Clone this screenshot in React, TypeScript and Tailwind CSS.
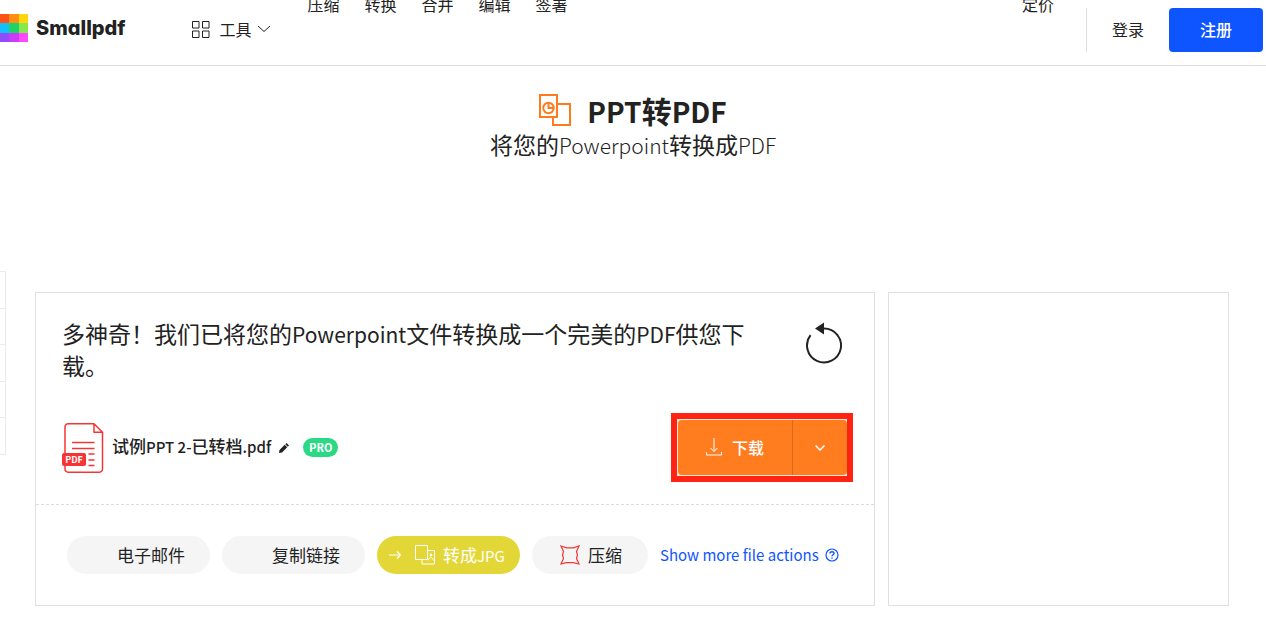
import React, { useState } from "react";

const navLinks = ["压缩", "转换", "合并", "编辑", "签署"];

const logoColors = [
  "fill-[#ff5219]",
  "fill-[#ff8f14]",
  "fill-[#ffd60a]",
  "fill-[#14bfff]",
  "fill-[#1fd466]",
  "fill-[#85e84d]",
  "fill-[#8f4dff]",
  "fill-[#c93dfa]",
  "fill-[#ff47ff]",
];

function LogoMark() {
  return (
    <svg className="h-7 w-7" viewBox="0 0 28 28" shapeRendering="crispEdges" aria-hidden="true">
      {logoColors.map((color, i) => (
        <rect
          key={color}
          className={color}
          x={(i % 3) * 9.4}
          y={Math.floor(i / 3) * 9.4}
          width="9.4"
          height="9.4"
        />
      ))}
    </svg>
  );
}

function ConvertIcon() {
  return (
    <svg className="h-8 w-8" viewBox="0 0 32 32" fill="none" stroke="#ff7a1c" strokeWidth="2" aria-hidden="true">
      <path d="M1 1h17v22H1z" />
      <path d="M18 10h13v21H14v-8" />
      <circle cx="9.5" cy="14" r="5.2" />
      <path d="M9.5 9v5h5" />
    </svg>
  );
}

function RestartIcon() {
  return (
    <svg className="h-[42px] w-9" viewBox="0 0 36 42" aria-hidden="true">
      <path
        d="M18 6.500A17 17 0 1 1 4.500 13.200"
        fill="none"
        stroke="#222"
        strokeWidth="2"
      />
      <path d="M9 6.500l9-6v12z" fill="#222" />
    </svg>
  );
}

function PdfFileIcon() {
  return (
    <svg className="h-[50px] w-[42px]" viewBox="0 0 42 50" fill="none" aria-hidden="true">
      <path
        d="M32 .8H6a3 3 0 0 0-3 3v42.400a3 3 0 0 0 3 3h31.500a3 3 0 0 0 3-3V9.200zM32 .8v8.400h8.500"
        stroke="#f73434"
        strokeWidth="1.500"
        strokeLinejoin="round"
      />
      <path d="M10 19.500h22.500M10 25.500h22.500M26.500 31h6M26.500 37h6M26.500 42.500h6" stroke="#f73434" strokeWidth="1.500" />
      <rect x="0" y="30" width="24" height="13" rx="2" fill="#f73434" />
      <text
        x="12"
        y="39.500"
        textAnchor="middle"
        className="fill-white font-['Noto_Sans_CJK_SC',sans-serif] text-[9px] font-bold"
      >
        PDF
      </text>
    </svg>
  );
}

function JpgIcon() {
  return (
    <svg className="h-5 w-5" viewBox="0 0 20 20" fill="none" stroke="white" strokeWidth="1" aria-hidden="true">
      <path d="M.5.5h12v14H.5z" />
      <path d="M12.500 5.500h7v13.500H7v-4.500" />
      <path d="M12.500 15l3.500-3 3.500 4" />
      <circle cx="16" cy="10" r="1" fill="white" />
    </svg>
  );
}

function CompressIcon() {
  return (
    <svg className="h-5 w-5" viewBox="0 0 20 20" fill="none" stroke="#f73434" strokeWidth="1.200" aria-hidden="true">
      <path d="M1 1l5.500 1.800h7L19 1l-2.500 5.500 1 3.500-1 3.500L19 19l-5.500-1.300h-7L1 19l2.500-5.500-1-3.500 1-3.500z" />
    </svg>
  );
}

function Header() {
  return (
    <header className="flex h-[66px] items-start border-b border-[#dcdcdc]">
      <a href="#home" className="flex items-center gap-2 pt-3.5">
        <LogoMark />
        <span className="font-['Inter',sans-serif] text-[20px] leading-7 font-extrabold [font-feature-settings:'cv11']">
          Smallpdf
        </span>
      </a>
      <button type="button" className="ml-[66px] flex items-center pt-[17px] text-base leading-6">
        <svg className="h-[18px] w-[18px]" viewBox="0 0 18 18" fill="none" stroke="#222" aria-hidden="true">
          <path d="M.5 1.500h6.500v6.500H.5zM10.500 1.500H17v6.500h-6.500zM.5 11h6.500v6.500H.5zM10.500 11H17v6.500h-6.500z" />
        </svg>
        <span className="ml-2.5">工具</span>
        <svg className="ml-1.5 h-2 w-3" viewBox="0 0 12 8" fill="none" stroke="#222" aria-hidden="true">
          <path d="M0 1l6 5.500L12 1" />
        </svg>
      </button>
      <nav className="-mt-2 ml-[38px] flex gap-[25px] text-base leading-6">
        {navLinks.map((label) => (
          <a key={label} href="#tool">
            {label}
          </a>
        ))}
      </nav>
      <a href="#pricing" className="-mt-2 mr-8 ml-auto text-base leading-6">
        定价
      </a>
      <div className="mt-2 mr-[3px] flex h-11 items-center border-l border-[#dcdcdc] text-base">
        <a href="#login" className="-mt-0.5 px-[25px]">
          登录
        </a>
        <button type="button" className="h-11 rounded bg-[#0f55ff] px-[31px] pb-0.5 font-medium text-white">
          注册
        </button>
      </div>
    </header>
  );
}

export default function App() {
  const [menuOpen, setMenuOpen] = useState(false);

  const pill = "flex h-[38px] items-center rounded-full bg-[#f5f5f5] text-[17px]";

  return (
    <div className="bg-white font-['Noto_Sans_CJK_SC',sans-serif] text-[#222]">
      <Header />

      <section className="pt-7 text-center">
        <div className="flex items-center justify-center gap-4">
          <ConvertIcon />
          <h1 className="text-[30px] leading-8 font-bold">
            <span className="text-[28px] leading-none">PPT</span>转<span className="text-[28px] leading-none">PDF</span>
          </h1>
        </div>
        <p className="mt-0.5 text-[23px] leading-8">
          将您的<span className="text-[21px] leading-none font-light">Powerpoint</span>转换成
          <span className="text-[21px] leading-none font-light">PDF</span>
        </p>
      </section>

      <main className="mt-[111px] flex items-start">
        <aside className="flex h-[184px] w-1.5 flex-col border-t border-r border-[#ebebeb]">
          {[0, 1, 2, 3, 4].map((row) => (
            <div key={row} className="flex-1 border-b border-[#ebebeb]" />
          ))}
        </aside>

        <div className="mt-[21px] mr-[37px] ml-[29px] flex flex-1 gap-[13px]">
          <section className="flex-1 border border-[#e0e0e0]">
            <div className="border-b border-dashed border-[#dcdcdc] pt-6 pr-[21px] pb-[22px] pl-[26px]">
              <div className="flex items-start justify-between">
                <h2 className="max-w-[684px] text-[23px] leading-8">
                  多神奇！我们已将您的<span className="text-[21px] leading-none">Powerpoint</span>文件转换成一个完美的
                  <span className="text-[21px] leading-none">PDF</span>供您下载。
                </h2>
                <button type="button" className="mt-[5px] mr-[11px]" aria-label="重新开始">
                  <RestartIcon />
                </button>
              </div>

              <div className="mt-8 flex items-center">
                <PdfFileIcon />
                <span className="-mt-1 ml-2 text-[17px] font-medium">
                  试例<span className="text-[15px]">PPT 2-</span>已转档<span className="text-[15px]">.pdf</span>
                </span>
                <button type="button" className="ml-2" aria-label="重命名">
                  <svg className="h-2.5 w-2.5" viewBox="0 0 10 10" fill="#222" aria-hidden="true">
                    <path d="M0 10l.5-3L5.700 1.800l2.500 2.500L3 9.500zM6.300 1.200L7.500 0 10 2.500 8.800 3.700z" />
                  </svg>
                </button>
                <span className="ml-3.5 h-[19px] rounded-full bg-[#2bd985] px-1.5 text-[11px] leading-[19px] font-bold text-white">
                  PRO
                </span>

                <div className="ml-auto flex h-[69px] border-[6px] border-[#ff2314] bg-[#ffe8d8] py-px pl-px text-white">
                  <button
                    type="button"
                    className="flex w-[114px] items-center justify-center rounded-l bg-[#ff7c1f] pb-0.5 text-base font-medium"
                  >
                    <svg className="mr-2.5 h-[18px] w-4" viewBox="0 0 16 18" fill="none" stroke="white" aria-hidden="true">
                      <path d="M8 0v13.500M4.500 10L8 13.500l3.500-3.500M.5 14v3h15v-3" />
                    </svg>
                    下载
                  </button>
                  <button
                    type="button"
                    className="flex w-[55px] items-center justify-center rounded-r border-l border-[#dc6a1a] bg-[#ff7c1f]"
                    aria-label="更多下载选项"
                    aria-expanded={menuOpen}
                    onClick={() => setMenuOpen(!menuOpen)}
                  >
                    <svg className="h-1.5 w-2.5" viewBox="0 0 10 6" fill="none" stroke="white" strokeWidth="1.500" aria-hidden="true">
                      <path d="M.5.5L5 5 9.500.5" />
                    </svg>
                  </button>
                </div>
              </div>
            </div>

            <div className="flex items-center gap-3 py-[31px] pl-[31px]">
              <button type="button" className={`${pill} w-[143px] justify-end pr-[25px]`}>
                电子邮件
              </button>
              <button type="button" className={`${pill} w-[143px] justify-end pr-[25px]`}>
                复制链接
              </button>
              <button
                type="button"
                className="flex h-[38px] w-[143px] items-center rounded-full bg-[#e3d738] pl-3 text-[17px] text-white"
              >
                <svg className="mr-3.5 h-2.5 w-3" viewBox="0 0 12 10" fill="none" stroke="white" strokeWidth="1.200" aria-hidden="true">
                  <path d="M0 5h11.500M8 1.500L11.500 5 8 8.500" />
                </svg>
                <JpgIcon />
                <span className="ml-2">
                  转成<span className="text-[15px]">JPG</span>
                </span>
              </button>
              <button type="button" className={`${pill} w-[116px] pl-7`}>
                <CompressIcon />
                <span className="ml-2">压缩</span>
              </button>
              <a href="#actions" className="flex items-center text-[15px] text-[#0f55ff]">
                Show more file actions
                <svg className="ml-1.5 h-3.5 w-3.5" viewBox="0 0 14 14" fill="none" stroke="#0f55ff" strokeWidth="1.200" aria-hidden="true">
                  <circle cx="7" cy="7" r="6" />
                  <path d="M5 5.600C5 3.200 9 3.200 9 5.400 9 6.800 7 6.700 7 8.300M7 9.500v1.300" strokeWidth="1.400" />
                </svg>
              </a>
            </div>
          </section>

          <aside className="w-[341px] border border-[#e0e0e0]" />
        </div>
      </main>
    </div>
  );
}
